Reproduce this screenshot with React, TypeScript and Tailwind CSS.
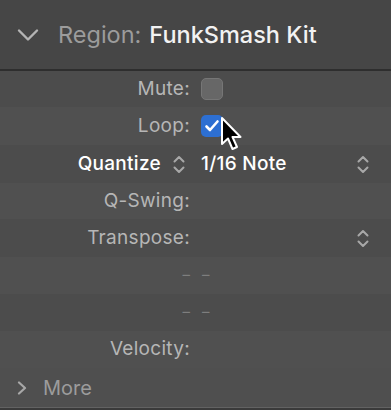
import React from "react";

const Updown = ({ className = "" }: { className?: string }) => (
  <svg width="14" height="21" viewBox="0 0 14 21" className={className} fill="none" stroke="#a8a8a8" strokeWidth="2" strokeLinecap="round" strokeLinejoin="round">
    <path d="M2.5 7.5 L7 3 L11.5 7.5" />
    <path d="M2.5 13.5 L7 18 L11.5 13.5" />
  </svg>
);

const Row = ({
  light,
  label,
  children,
  h = "h-[37px]",
}: {
  light: boolean;
  label: React.ReactNode;
  children?: React.ReactNode;
  h?: string;
}) => (
  <div className={`${h} flex items-center ${light ? "bg-[#505050]" : "bg-[#4c4c4c]"}`}>
    <div className="w-[190px] flex justify-end items-center shrink-0">{label}</div>
    <div className="flex-1 flex items-center pl-[11px] pr-[20px] h-full">{children}</div>
  </div>
);

const Label = ({ children }: { children: React.ReactNode }) => (
  <span className="text-[19px] text-[#b6b6b6] tracking-[0.3px]">{children}</span>
);

export default function App() {
  return (
    <div
      className="w-[391px] h-[410px] bg-[#4c4c4c] flex flex-col overflow-hidden relative"
      style={{ fontFamily: "Inter, 'Noto Sans', sans-serif" }}
    >
      <div className="h-[69px] bg-[#464646] flex items-center pl-[17px] shrink-0">
        <svg width="22" height="14" viewBox="0 0 22 14" fill="none" stroke="#b4b4b4" strokeWidth="2.4" strokeLinecap="round" strokeLinejoin="round">
          <path d="M2 2.5 L11 11.5 L20 2.5" />
        </svg>
        <span className="ml-[19px] text-[23.5px] text-[#9c9c9c]">Region:</span>
        <span className="ml-[8px] text-[23.5px] text-[#f2f2f2] font-medium">FunkSmash Kit</span>
      </div>
      <div className="h-[2px] bg-[#2e2e2e] shrink-0" />
      <Row light={false} h="h-[36px]" label={<Label>Mute:</Label>}>
        <div className="w-[22px] h-[22px] rounded-[5px] bg-[#676767] border border-[#767676]" />
      </Row>
      <Row light={true} h="h-[38px]" label={<Label>Loop:</Label>}>
        <div className="w-[22px] h-[22px] rounded-[5px] bg-[#2d6fd2] flex items-center justify-center">
          <svg width="16" height="14" viewBox="0 0 16 14" fill="none" stroke="white" strokeWidth="2.6" strokeLinecap="round" strokeLinejoin="round">
            <path d="M2.5 7.5 L6 11 L13.5 2.5" />
          </svg>
        </div>
      </Row>
      <Row
        light={false}
        h="h-[38px]"
        label={
          <div className="flex items-center gap-[11px] pr-[4px]">
            <span className="text-[19px] text-white font-medium tracking-[0.3px]">Quantize</span>
            <Updown />
          </div>
        }
      >
        <span className="text-[19px] text-white font-medium tracking-[0.3px] flex-1">1/16 Note</span>
        <Updown className="mr-[1px]" />
      </Row>
      <Row light={true} h="h-[36px]" label={<Label>Q-Swing:</Label>} />
      <Row light={false} h="h-[38px]" label={<Label>Transpose:</Label>}>
        <span className="flex-1" />
        <Updown className="mr-[1px]" />
      </Row>
      <Row light={true} label={<span className="text-[15px] text-[#7e7e7e]">–</span>}>
        <span className="text-[15px] text-[#7e7e7e] ml-[1px]">–</span>
      </Row>
      <Row light={false} label={<span className="text-[15px] text-[#7e7e7e]">–</span>}>
        <span className="text-[15px] text-[#7e7e7e] ml-[1px]">–</span>
      </Row>
      <Row light={true} label={<Label>Velocity:</Label>} />
      <div className="h-[39px] bg-[#4f4f4f] flex items-center pl-[17px] shrink-0">
        <svg width="10" height="14" viewBox="0 0 10 14" fill="none" stroke="#a8a8a8" strokeWidth="2.2" strokeLinecap="round" strokeLinejoin="round">
          <path d="M2 1.5 L8 7 L2 12.5" />
        </svg>
        <span className="ml-[16px] text-[20px] text-[#9c9c9c]">More</span>
      </div>
      <div className="h-[1px] bg-[#626262] shrink-0" />
      <div className="flex-1 bg-[#3a3a3a]" />
      <svg className="absolute left-[219px] top-[116px]" width="30" height="38" viewBox="0 0 30 38">
        <path
          d="M3 2 L3 28 L9 22.5 L13.5 33 L18 31 L13.5 21 L21.5 21 Z"
          fill="black"
          stroke="white"
          strokeWidth="2"
          strokeLinejoin="round"
        />
      </svg>
    </div>
  );
}
